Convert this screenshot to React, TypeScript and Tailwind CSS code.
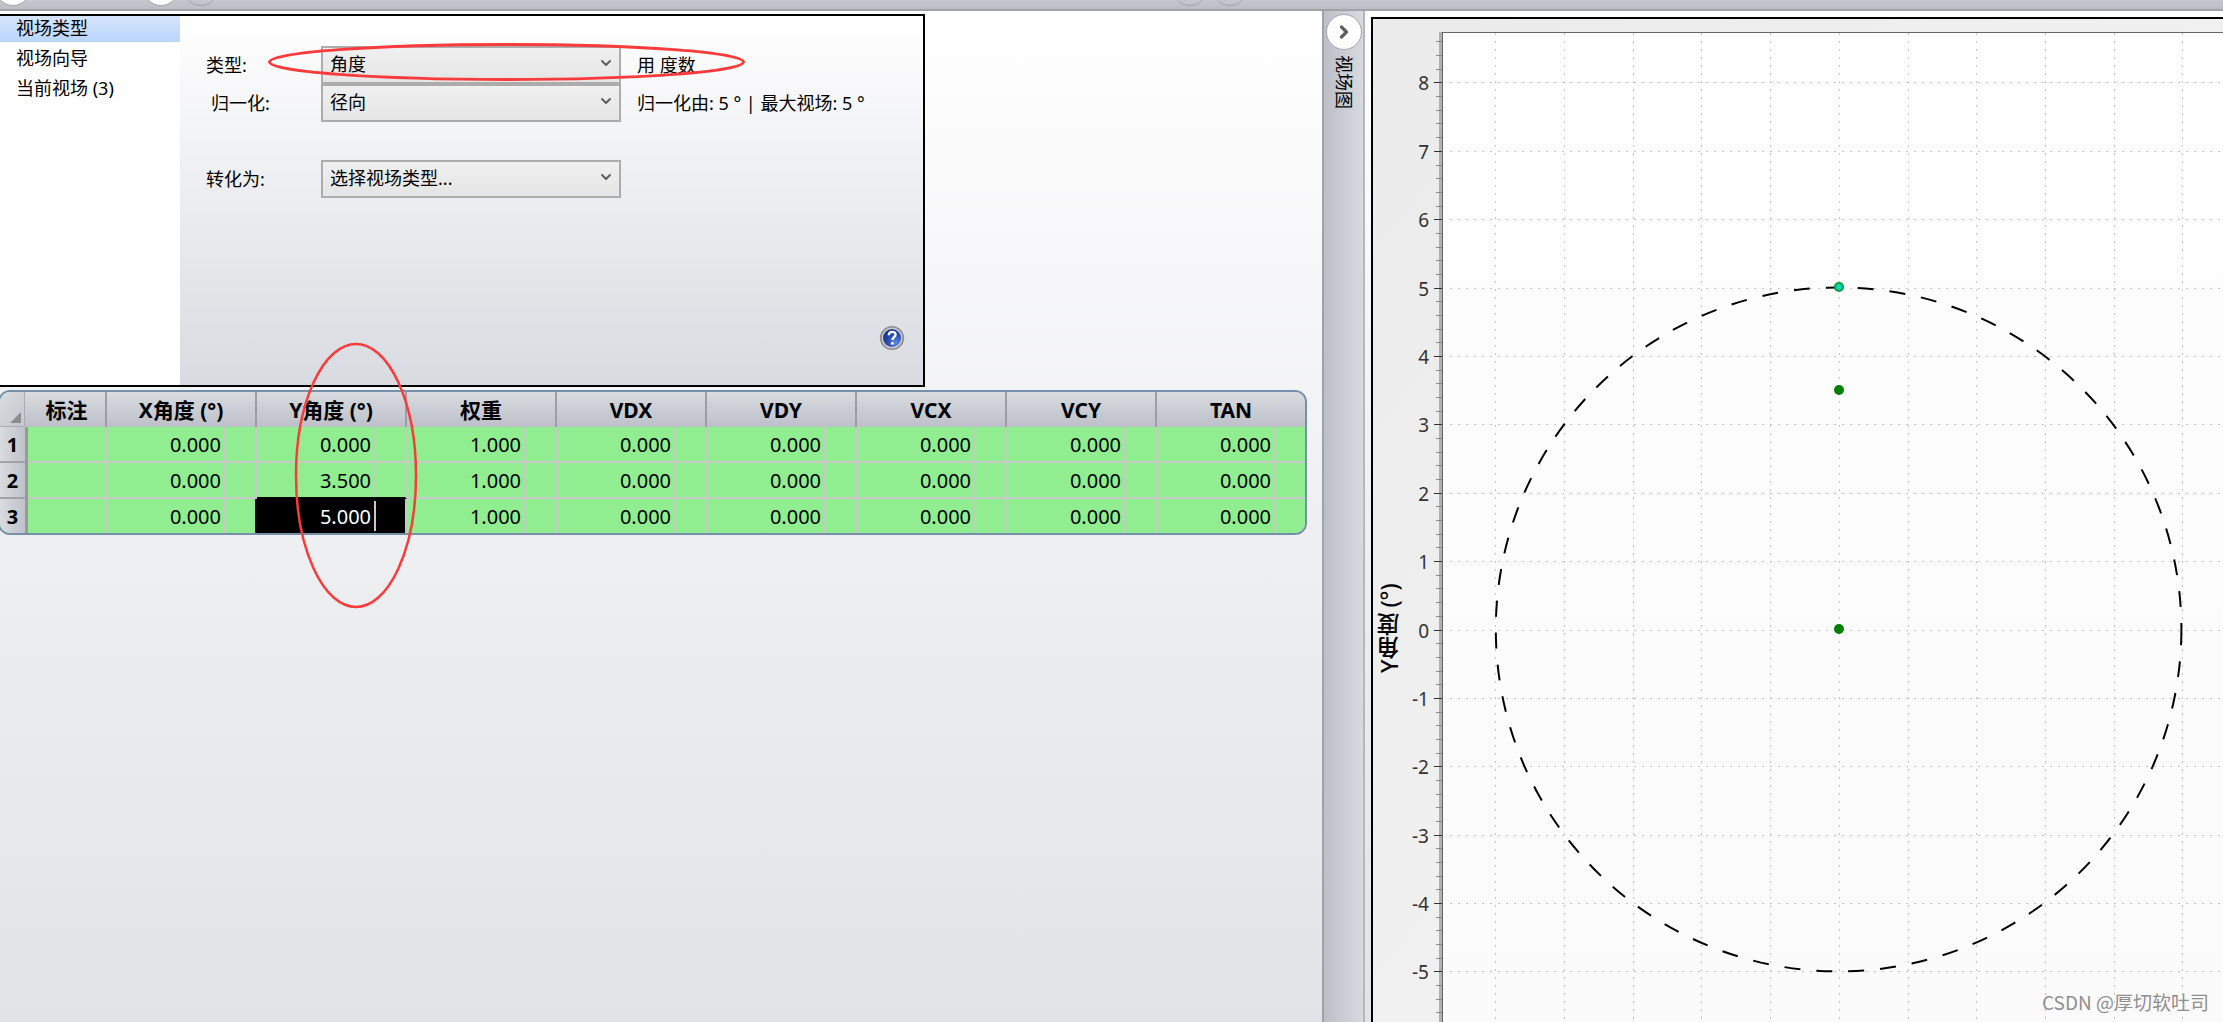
import React from 'react';
import { ChevronDown, ChevronRight } from 'lucide-react';

const menu = ['视场类型', '视场向导', '当前视场 (3)'];

const columns = ['X角度 (°)', 'Y角度 (°)', '权重', 'VDX', 'VDY', 'VCX', 'VCY', 'TAN'];

const rows = [
  ['0.000', '0.000', '1.000', '0.000', '0.000', '0.000', '0.000', '0.000'],
  ['0.000', '3.500', '1.000', '0.000', '0.000', '0.000', '0.000', '0.000'],
  ['0.000', '5.000', '1.000', '0.000', '0.000', '0.000', '0.000', '0.000'],
];

// selected cell
const selRow = 2;
const selCol = 1;

// plot scale
const plotLeft = 37;
const plotTop = 13;
const toX = (v: number) => Math.floor(434.3 + v * 68.7) + 0.5;
const toY = (v: number) => Math.floor(611 - v * 68.38) + 0.5;

const yTicks = Array.from({ length: 14 }).map((_, i) => 8 - i);
const xTicks = Array.from({ length: 11 }).map((_, i) => i - 5);
const minorTicks = Array.from({ length: 73 })
  .map((_, i) => 43 - i)
  .filter((n) => n % 5 !== 0)
  .map((n) => n / 5);

function RoundButton({ label, className }: { label: string; className: string }) {
  return (
    <button
      type="button"
      aria-label={label}
      className={`h-9 w-9 shrink-0 rounded-full border border-[#a3a4a8] ${className}`}
    />
  );
}

function TopBar() {
  return (
    <div className="flex h-[11px] shrink-0 items-end overflow-hidden border-b-2 border-[#a0a2a9] bg-linear-to-b from-[#c5c8cd] to-[#bbbec5] pb-[3px]">
      <RoundButton label="展开" className="-ml-[5px] bg-white" />
      <RoundButton label="上一个" className="ml-[112px] bg-white" />
      <RoundButton label="下一个" className="ml-1" />
      <RoundButton label="后退" className="ml-[953px]" />
      <RoundButton label="前进" className="ml-1" />
    </div>
  );
}

function FormRow({ id, label, option, note, indent }: { id: string; label: string; option: string; note?: string; indent?: boolean }) {
  return (
    <div className="flex h-[38px] items-center">
      <label htmlFor={id} className={`w-[115px] ${indent ? 'pl-[5px]' : ''}`}>
        {label}
      </label>
      <div className="relative h-full w-[300px] shrink-0">
        <select
          id={id}
          className="h-full w-full appearance-none border-2 border-[#acacac] bg-linear-to-b from-[#f0f0f0] to-[#e5e5e5] pb-0.5 pl-[7px]"
        >
          <option>{option}</option>
        </select>
        <ChevronDown className="pointer-events-none absolute top-[9px] right-[7px] h-4 w-4 text-[#606060]" strokeWidth={3} />
      </div>
      {note && <span className="pl-4 whitespace-pre">{note}</span>}
    </div>
  );
}

function HelpIcon() {
  return (
    <svg width="26" height="26" viewBox="0 0 26 26">
      <defs>
        <radialGradient id="help" cx="0.7" cy="0.75" r="0.8">
          <stop offset="0%" stopColor="#5b86e6" />
          <stop offset="60%" stopColor="#2747ad" />
          <stop offset="100%" stopColor="#1c3590" />
        </radialGradient>
      </defs>
      <circle cx="13" cy="13" r="11.3" fill="#c9cbcf" stroke="#8d8d90" strokeWidth="1.6" />
      <circle cx="13" cy="13" r="9" fill="url(#help)" />
      <path d="M9.8 10.2c0-4.6 6.8-4.2 6.8-.6 0 2.4-3.2 2.6-3.2 5.4" fill="none" stroke="#fff" strokeWidth="2.3" />
      <circle cx="13.4" cy="18.2" r="1.5" fill="#fff" />
    </svg>
  );
}

function SettingsPanel() {
  return (
    <section className="mt-[3px] flex h-[373px] w-[925px] border-2 border-l-0 border-black text-lg leading-6">
      <ul className="flex w-[180px] shrink-0 flex-col gap-1 bg-white">
        {menu.map((m, i) => (
          <li key={m}>
            <a
              href="#"
              className={`block h-[26px] pl-4 ${i === 0 ? 'bg-linear-to-b from-[#d6e5fc] to-[#b9d6fc]' : ''}`}
            >
              {m}
            </a>
          </li>
        ))}
      </ul>
      <div className="flex flex-1 flex-col bg-linear-to-b from-white to-[#d8dbe0] pt-[30px] pl-[26px]">
        <FormRow id="type" label="类型:" option="角度" note="用 度数" />
        <FormRow id="norm" label="归一化:" option="径向" note="归一化由: 5 ° | 最大视场: 5 °" indent />
        <div className="h-[38px]" />
        <FormRow id="convert" label="转化为:" option="选择视场类型..." />
        <button type="button" aria-label="帮助" className="mt-auto mr-[18px] mb-[34px] self-end">
          <HelpIcon />
        </button>
      </div>
    </section>
  );
}

function FieldTable() {
  return (
    <div className="mt-[3px] -ml-0.5 w-[1309px] overflow-hidden rounded-xl border-2 border-[#7590a8]">
      <table className="w-full table-fixed border-separate border-spacing-0">
        <colgroup>
          <col className="w-7" />
          <col className="w-[79px]" />
          {columns.map((c, i) => (
            <React.Fragment key={c}>
              <col className="w-[119px]" />
              <col className={i < columns.length - 1 ? 'w-[31px]' : ''} />
            </React.Fragment>
          ))}
        </colgroup>
        <thead>
          <tr className="h-[35px] bg-linear-to-b from-[#d8dbdf] to-[#bdc0c8] text-[21px] leading-7">
            <th className="p-0">
              <div className="flex h-[35px] w-[25px] items-end justify-end border-r border-b border-[#a9abb0] bg-linear-to-br from-[#d9dce0] to-[#c4c7cd] pr-[3px] pb-[3px]">
                <svg width="11" height="11">
                  <path d="M11 0V11H0Z" fill="#8b8c90" />
                </svg>
              </div>
            </th>
            <th className="border-r-2 border-[#9c9ea3] p-0">标注</th>
            {columns.map((c, i) => (
              <th key={c} colSpan={2} className={`p-0 ${i < columns.length - 1 ? 'border-r-2 border-[#9c9ea3]' : ''}`}>
                {c}
              </th>
            ))}
          </tr>
        </thead>
        <tbody>
          {rows.map((row, r) => {
            const last = r === rows.length - 1;
            return (
              <tr key={r} className="bg-[#90ee90] text-xl leading-7">
                <th
                  className={`border-r-[3px] border-r-[#999] bg-linear-to-r from-[#d8dbdf] to-[#bfc2c9] p-0 pt-0.5 ${last ? '' : 'border-b-2 border-b-[#a0a2a8]'}`}
                >
                  {r + 1}
                </th>
                <td className={`border-r-2 border-[#c8c8c8] p-0 ${last ? '' : 'border-b-2'}`} />
                {row.map((v, c) => {
                  const sel = r === selRow && c === selCol;
                  const above = r === selRow - 1 && c === selCol;
                  const before = r === selRow && c === selCol - 1;
                  return (
                    <React.Fragment key={c}>
                      <td
                        className={`p-0 ${last ? '' : 'border-b-2'} ${above ? 'border-black' : 'border-[#c8c8c8]'} ${sel ? 'bg-black text-white' : ''}`}
                      >
                        <div className={`flex items-center justify-end border-r-2 border-[#c8c8c8] pt-0.5 pr-[3px] ${sel ? 'h-[30px]' : 'h-[34px]'}`}>
                          {v}
                        </div>
                      </td>
                      <td
                        className={`p-0 ${last ? '' : 'border-b-2'} ${c < row.length - 1 ? 'border-r-2' : ''} ${above ? 'border-b-black' : 'border-b-[#c8c8c8]'} ${before ? 'border-r-black' : 'border-r-[#c8c8c8]'} ${sel ? 'bg-black' : ''}`}
                      />
                    </React.Fragment>
                  );
                })}
              </tr>
            );
          })}
        </tbody>
      </table>
    </div>
  );
}

function FieldChart() {
  return (
    <section className="mt-1.5 ml-1.5 flex min-w-0 flex-1 border-t-2 border-l-2 border-black bg-linear-to-br from-[#ebebeb] to-[#f6f6f6]">
      <div className="flex w-8 shrink-0 rotate-180 items-center justify-end pb-[564px] text-[23px] leading-8 font-medium [writing-mode:vertical-rl]">
        Y角度 (°)
      </div>
      <svg className="h-full min-w-0 flex-1">
        <defs>
          <linearGradient id="plotBg" x1="0" y1="0" x2="0" y2="1">
            <stop offset="0%" stopColor="#fefefe" />
            <stop offset="100%" stopColor="#fbfbfb" />
          </linearGradient>
          <radialGradient id="activePoint">
            <stop offset="0%" stopColor="#00f0e8" />
            <stop offset="50%" stopColor="#10c8a0" />
            <stop offset="100%" stopColor="#008a10" />
          </radialGradient>
        </defs>
        <rect x={plotLeft} y={plotTop} width="100%" height="100%" fill="url(#plotBg)" />
        <rect x={plotLeft - 3} y={plotTop} width="3" height="100%" fill="#b0b0b0" />

        <g stroke="#c6c6c6" strokeDasharray="2 6">
          {yTicks.map((v) => (
            <line key={v} x1={plotLeft + 8} x2="100%" y1={toY(v)} y2={toY(v)} />
          ))}
          {xTicks.map((v) => (
            <line key={v} x1={toX(v)} x2={toX(v)} y1={plotTop + 1} y2="100%" />
          ))}
        </g>

        {minorTicks.map((v) => (
          <line key={v} x1={plotLeft - 6} x2={plotLeft} y1={toY(v)} y2={toY(v)} stroke="#888" />
        ))}
        {yTicks.map((v) => (
          <g key={v}>
            <line x1={plotLeft - 8} x2={plotLeft} y1={toY(v)} y2={toY(v)} stroke="#333" />
            <text x={plotLeft - 13} y={toY(v) + 7} textAnchor="end" fontSize="19" fill="#333">
              {v}
            </text>
          </g>
        ))}
        <line x1={plotLeft + 0.5} x2={plotLeft + 0.5} y1={plotTop} y2="100%" stroke="#666" />
        <line x1={plotLeft} x2="100%" y1={plotTop + 0.5} y2={plotTop + 0.5} stroke="#666" />

        <ellipse cx="433.6" cy="610.4" rx="342.8" ry="342" fill="none" stroke="#000" strokeWidth="2" strokeDasharray="16 16" />
        <circle cx="434" cy="610" r="5" fill="#008000" />
        <circle cx="434" cy="371" r="5" fill="#008000" />
        <circle cx="434" cy="268" r="5" fill="url(#activePoint)" />
      </svg>
    </section>
  );
}

export default function App() {
  return (
    <div className="relative flex h-screen flex-col overflow-hidden bg-linear-to-b from-white via-[#eff0f2] to-[#e2e3e6] font-['Noto_Sans','Noto_Sans_CJK_SC',sans-serif] text-black">
      <TopBar />
      <div className="flex min-h-0 flex-1">
        <main className="w-[1322px] shrink-0">
          <SettingsPanel />
          <FieldTable />
        </main>
        <aside className="flex w-[43px] shrink-0 flex-col items-center border-x-2 border-l-[#a0a2a9] border-r-[#b5b7bc] bg-linear-to-r from-[#bcbfc7] to-[#d7dade] pt-[3px]">
          <button
            type="button"
            aria-label="收起"
            className="flex h-9 w-9 items-center justify-center rounded-full border border-[#a3a4a8] bg-white"
          >
            <ChevronRight className="h-5 w-5 text-[#606060]" strokeWidth={4} />
          </button>
          <span className="mt-[5px] text-lg leading-6 [text-orientation:sideways] [writing-mode:vertical-rl]">视场图</span>
        </aside>
        <FieldChart />
      </div>

      {/* red markup */}
      <svg className="pointer-events-none absolute top-0 left-0 h-full w-full" fill="none" stroke="#fb3b3b">
        <ellipse cx="506.5" cy="62" rx="237" ry="17.5" strokeWidth="3" />
        <ellipse cx="356" cy="475.5" rx="60" ry="131.5" strokeWidth="2.5" />
      </svg>
      <div className="absolute right-3.5 bottom-1.5 font-['Noto_Sans_CJK_SC',sans-serif] text-[19px] leading-7 text-[#8f8f8f]">
        CSDN @厚切软吐司
      </div>
    </div>
  );
}
